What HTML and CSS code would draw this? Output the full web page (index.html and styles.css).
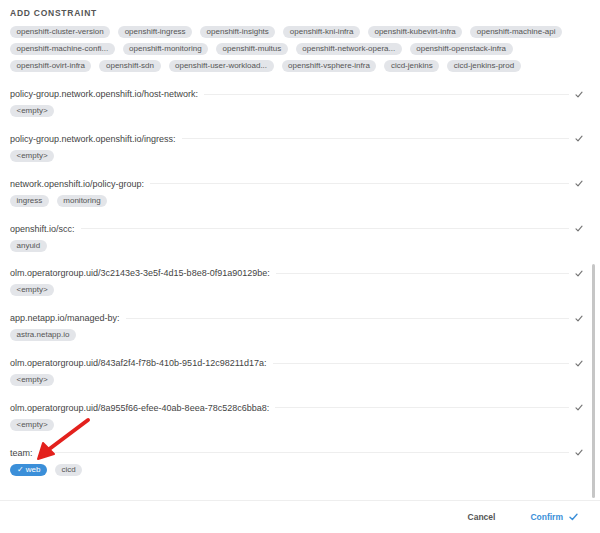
FILE: index.html
```html
<!DOCTYPE html>
<html lang="en">
<head>
  <meta charset="UTF-8">
  <title>Add Constraint</title>
  <link rel="stylesheet" href="styles.css">
</head>
<body>
  <div class="panel">
    <div class="scroll">
      <h2>Add Constraint</h2>
      <div class="chips">
        <span class="chip">openshift-cluster-version</span>
        <span class="chip">openshift-ingress</span>
        <span class="chip">openshift-insights</span>
        <span class="chip">openshift-kni-infra</span>
        <span class="chip">openshift-kubevirt-infra</span>
        <span class="chip">openshift-machine-api</span>
        <span class="chip">openshift-machine-confi...</span>
        <span class="chip">openshift-monitoring</span>
        <span class="chip">openshift-multus</span>
        <span class="chip">openshift-network-opera...</span>
        <span class="chip">openshift-openstack-infra</span>
        <span class="chip">openshift-ovirt-infra</span>
        <span class="chip">openshift-sdn</span>
        <span class="chip">openshift-user-workload...</span>
        <span class="chip">openshift-vsphere-infra</span>
        <span class="chip">cicd-jenkins</span>
        <span class="chip">cicd-jenkins-prod</span>
      </div>

      <div class="groups" id="groups"></div>
    </div>
    <div class="scrollbar"></div>

    <!-- annotation arrow -->
    <svg class="arrow" width="70" height="50" viewBox="0 0 70 50">
      <line x1="60" y1="6" x2="20" y2="36" stroke="#e3211d" stroke-width="4" stroke-linecap="round"/>
      <polygon points="10,45 15,29 26,40" fill="#e3211d" stroke="#e3211d" stroke-width="2" stroke-linejoin="round"/>
    </svg>
  </div>

  <div class="footer">
    <button class="btn cancel">Cancel</button>
    <button class="btn confirm">Confirm
      <svg width="9" height="8" viewBox="0 0 9 8"><path d="M1 4.2 L3.4 6.5 L8 1.2" fill="none" stroke="#3b8fd9" stroke-width="1.4" stroke-linecap="round" stroke-linejoin="round"/></svg>
    </button>
  </div>

  <script>
    const groups = [
      { key: 'policy-group.network.openshift.io/host-network:', values: ['<empty>'] },
      { key: 'policy-group.network.openshift.io/ingress:', values: ['<empty>'] },
      { key: 'network.openshift.io/policy-group:', values: ['ingress', 'monitoring'] },
      { key: 'openshift.io/scc:', values: ['anyuid'] },
      { key: 'olm.operatorgroup.uid/3c2143e3-3e5f-4d15-b8e8-0f91a90129be:', values: ['<empty>'] },
      { key: 'app.netapp.io/managed-by:', values: ['astra.netapp.io'] },
      { key: 'olm.operatorgroup.uid/843af2f4-f78b-410b-951d-12c98211d17a:', values: ['<empty>'] },
      { key: 'olm.operatorgroup.uid/8a955f66-efee-40ab-8eea-78c528c6bba8:', values: ['<empty>'] },
      { key: 'team:', values: ['web', 'cicd'], selected: 'web' }
    ];

    const check = '<svg width="8" height="7" viewBox="0 0 8 7"><path d="M1 3.8 L3 5.8 L7 1.2" fill="none" stroke="#777" stroke-width="1.2" stroke-linecap="round" stroke-linejoin="round"/></svg>';
    const container = document.getElementById('groups');

    groups.forEach(g => {
      const group = document.createElement('div');
      group.className = 'group';

      const head = document.createElement('div');
      head.className = 'group-head';
      const label = document.createElement('span');
      label.className = 'group-label';
      label.textContent = g.key;
      const rule = document.createElement('span');
      rule.className = 'rule';
      const tick = document.createElement('span');
      tick.className = 'tick';
      tick.innerHTML = check;
      head.appendChild(label);
      head.appendChild(rule);
      head.appendChild(tick);

      const chips = document.createElement('div');
      chips.className = 'chips';
      g.values.forEach(v => {
        const chip = document.createElement('span');
        chip.className = 'chip';
        if (v === g.selected) {
          chip.classList.add('selected');
          chip.textContent = '\u2713 ' + v;
        } else {
          chip.textContent = v;
        }
        chips.appendChild(chip);
      });

      group.appendChild(head);
      group.appendChild(chips);
      container.appendChild(group);
    });
  </script>
</body>
</html>
```

FILE: styles.css
```css
body {
  margin: 0;
  font-family: 'Liberation Sans', Arial, sans-serif;
  color: #444;
  background: #fff;
  width: 600px;
  height: 533px;
  overflow: hidden;
}
.panel {
  position: relative;
  height: 500px;
  border-bottom: 1px solid #eee;
  overflow: hidden;
}
.scroll {
  padding: 7px 17px 0 10px;
}
h2 {
  margin: 0 0 7px;
  font-size: 8.5px;
  line-height: 12px;
  font-weight: bold;
  letter-spacing: 0.75px;
  text-transform: uppercase;
  color: #555;
}
.chips {
  display: flex;
  flex-wrap: wrap;
  gap: 5px 8px;
}
.chip {
  display: inline-block;
  height: 12px;
  line-height: 12px;
  padding: 0 6.5px;
  border-radius: 6px;
  background-color: #e3e5e9;
  color: #555;
  font-size: 8px;
}
.chip.selected {
  background-color: #3b8fd9;
  color: #fff;
}
.groups {
  display: flex;
  flex-direction: column;
  gap: 15.85px;
  margin-top: 16px;
}
.group-head {
  display: flex;
  align-items: center;
  height: 12px;
  margin-bottom: 5px;
}
.group-label {
  font-size: 9px;
  color: #444;
  white-space: nowrap;
}
.rule {
  flex: 1;
  height: 1px;
  background-color: #eee;
  margin: 0 6px 0 6px;
}
.tick {
  display: flex;
  width: 8px;
}
.scrollbar {
  position: absolute;
  right: 5px;
  top: 264px;
  width: 3px;
  height: 234px;
  background-color: #c6c6c6;
  border-radius: 2px;
}
.arrow {
  position: absolute;
  left: 28px;
  top: 414px;
}
.footer {
  display: flex;
  justify-content: flex-end;
  align-items: center;
  gap: 35px;
  height: 32px;
  padding-right: 22px;
}
.btn {
  background: none;
  border: none;
  padding: 0;
  font-family: inherit;
  font-size: 8.5px;
  font-weight: bold;
  cursor: pointer;
}
.cancel {
  color: #555;
}
.confirm {
  color: #3b8fd9;
  display: flex;
  align-items: center;
  gap: 6px;
}
```
